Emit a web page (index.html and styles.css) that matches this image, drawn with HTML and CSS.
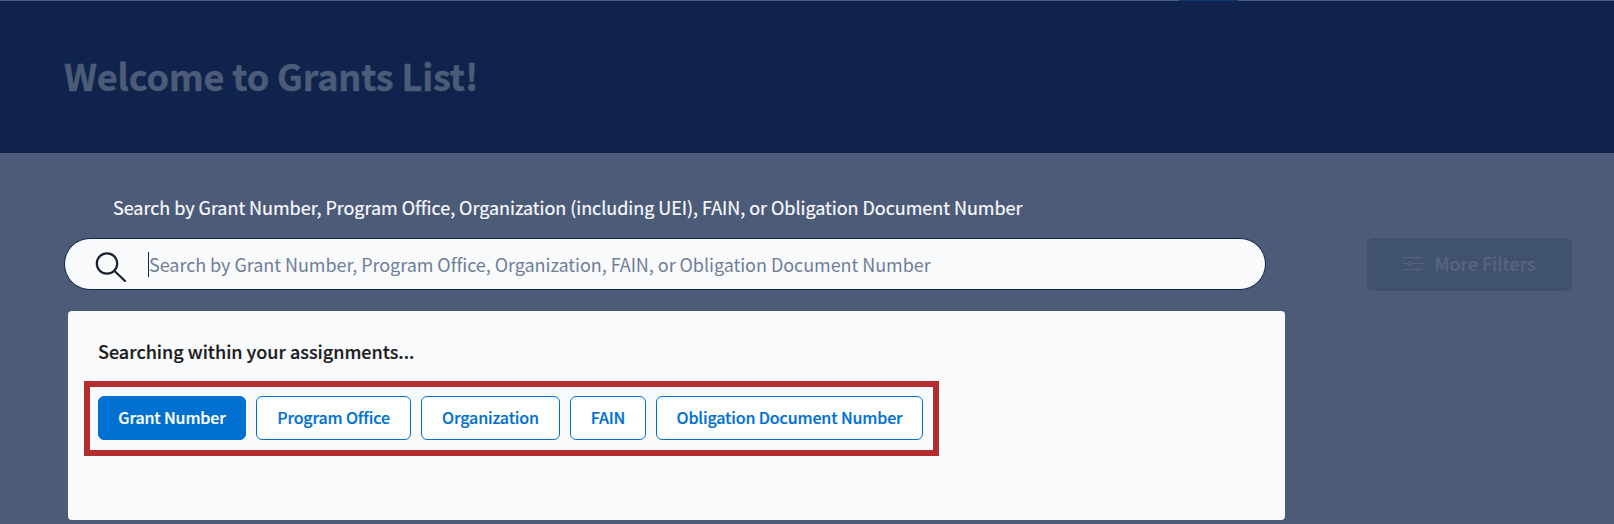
FILE: index.html
```html
<!DOCTYPE html>
<html lang="en">
<head>
    <meta charset="UTF-8">
    <meta name="viewport" content="width=device-width, initial-scale=1.0">
    <title>Grants List</title>
    <link rel="stylesheet" href="styles.css">
</head>
<body>
    <div class="top-line">
        <div class="top-tab"></div>
    </div>

    <header>
        <h1>Welcome to Grants List!</h1>
    </header>

    <div class="container">
        <p class="search-label">Search by Grant Number, Program Office, Organization (including UEI), FAIN, or Obligation Document Number</p>

        <div class="search-row">
            <div class="search-box">
                <svg class="search-icon" viewBox="0 0 33 36" width="33" height="36" fill="none" stroke="#1b1f2e" stroke-width="2.2">
                    <circle cx="13" cy="17.5" r="10.2"/>
                    <path d="M20.5 25 L31 35" stroke-linecap="round"/>
                </svg>
                <span class="caret"></span>
                <input type="text" class="search-input" placeholder="Search by Grant Number, Program Office, Organization, FAIN, or Obligation Document Number">
            </div>
            <button class="filter-button">
                <svg viewBox="0 0 20 16" width="20" height="16" fill="none" stroke="#56647f" stroke-width="1.2">
                    <path d="M0 2.5H13M16 2.5H20M0 8.5H5M8 8.5H20M0 14.5H13M16 14.5H20"/>
                    <circle cx="14.5" cy="2.5" r="1.5"/>
                    <circle cx="6.5" cy="8.5" r="1.5"/>
                    <circle cx="14.5" cy="14.5" r="1.5"/>
                </svg>
                More Filters
            </button>
        </div>

        <section class="panel">
            <h2>Searching within your assignments...</h2>
            <div class="options">
                <button class="option active">Grant Number</button>
                <button class="option">Program Office</button>
                <button class="option">Organization</button>
                <button class="option">FAIN</button>
                <button class="option">Obligation Document Number</button>
            </div>
        </section>
    </div>
</body>
</html>
```

FILE: styles.css
```css
html, body {
    height: 524px;
    overflow: hidden;
}
body {
    font-family: "Noto Sans CJK SC", "Liberation Sans", sans-serif;
    margin: 0;
    padding: 0;
    background-color: #4c5b77;
}
.top-line {
    height: 1px;
    background-color: #4c5b77;
    padding-left: 1179px;
}
.top-tab {
    width: 59px;
    height: 4px;
    background-color: #0f3a70;
}
header {
    box-sizing: border-box;
    height: 152px;
    background-color: #0f234d;
    padding-left: 64px;
    display: flex;
    align-items: center;
}
h1 {
    margin: 0 0 2px;
    color: #4c5b77;
    font-size: 36px;
    font-weight: 700;
    letter-spacing: -0.14px;
    -webkit-text-stroke: 0.5px #4c5b77;
    line-height: 1.2;
}
.container {
    padding-left: 64px;
}
.search-label {
    margin: 0;
    padding: 42px 0 0 49px;
    color: #f8f9fc;
    font-size: 18px;
    letter-spacing: -0.04px;
    -webkit-text-stroke: 0.2px #f8f9fc;
    line-height: 24px;
}
.search-row {
    display: flex;
    align-items: flex-start;
    margin-top: 19px;
}
.search-box {
    box-sizing: border-box;
    width: 1202px;
    height: 52px;
    display: flex;
    align-items: center;
    background-color: #f9fafc;
    border: 1px solid #0f234d;
    border-radius: 26px;
    padding-left: 29px;
}
.search-icon {
    flex: none;
    margin-right: 21px;
}
.caret {
    flex: none;
    width: 1px;
    height: 25px;
    background-color: #0f234d;
}
.search-input {
    flex: 1;
    border: 0;
    padding: 0;
    background: transparent;
    font-family: inherit;
    font-size: 18px;
    letter-spacing: -0.05px;
    color: #1b1f2e;
    outline: none;
}
.search-input::placeholder {
    color: #6f7e98;
    opacity: 1;
}
.filter-button {
    box-sizing: border-box;
    width: 205px;
    height: 53px;
    margin-left: 101px;
    padding: 0 0 3px;
    display: flex;
    align-items: center;
    justify-content: center;
    gap: 11px;
    border: 0;
    border-radius: 6px;
    background-color: #41526f;
    color: #56647f;
    font-family: inherit;
    font-size: 18px;
    font-weight: 500;
    -webkit-text-stroke: 0.25px #56647f;
}
.panel {
    box-sizing: border-box;
    width: 1217px;
    height: 209px;
    margin: 20px 0 0 4px;
    padding: 26px 16px 0 16px;
    background-color: #f9fafc;
    border-radius: 4px;
}
h2 {
    margin: 0 0 16px 14px;
    color: #1b1b1b;
    font-size: 18px;
    font-weight: 500;
    -webkit-text-stroke: 0.2px #1b1b1b;
    line-height: 28px;
}
.options {
    display: inline-grid;
    grid-template-columns: 148px 155px 139px 76px 267px;
    column-gap: 10px;
    padding: 9px 10px 10px 8px;
    border: 6px solid #b32d2e;
}
.option {
    box-sizing: border-box;
    height: 44px;
    padding: 0 0 2px;
    border: 1px solid #0071d0;
    border-radius: 6px;
    background-color: #fff;
    color: #0071d0;
    font-family: inherit;
    font-size: 16px;
    font-weight: 500;
    letter-spacing: -0.13px;
    -webkit-text-stroke: 0.2px;
    white-space: nowrap;
}
.option.active {
    background-color: #0071d0;
    color: #fff;
}
```
